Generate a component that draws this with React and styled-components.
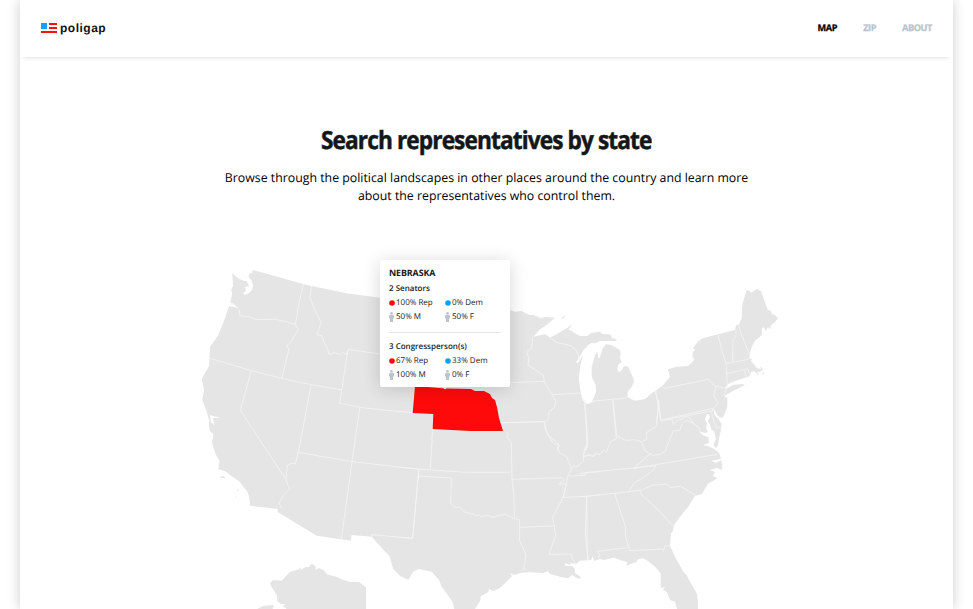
import React from "react";
import styled, { createGlobalStyle } from "styled-components";

const GlobalStyle = createGlobalStyle`
  * { box-sizing: border-box; }
  body { margin: 0; background: #fff; overflow: hidden; font-family: "Open Sans", "Noto Sans", sans-serif; color: #14171a; text-rendering: geometricPrecision; }
`;

const Shell = styled.div`
  width: 933px;
  height: 609px;
  margin: 0 20px;
  background: #fff;
  box-shadow: 0 0 12px rgba(0, 0, 0, 0.2);
  overflow: hidden;
`;

const Header = styled.header`
  height: 57px;
  padding: 0 21px 2px 20px;
  display: flex;
  align-items: center;
  justify-content: space-between;
  box-shadow: 0 5px 4px -4px rgba(0, 0, 0, 0.12);
`;

const Brand = styled.div`
  display: flex;
  align-items: center;
  gap: 3px;
  height: 18px;
  font: 700 12px/18px "Liberation Sans", Arial, sans-serif;
  letter-spacing: 0.5px;
  color: #101114;
`;

const Nav = styled.nav`
  display: flex;
  gap: 26px;
`;

const NavLink = styled.a`
  font-size: 9.2px;
  line-height: 12px;
  font-weight: 700;
  letter-spacing: -0.42px;
  -webkit-text-stroke: 0.25px currentColor;
  color: ${(p) => (p.$active ? "#000" : "#b9c3cf")};
`;

const Intro = styled.section`
  display: flex;
  flex-direction: column;
  align-items: center;
  height: 198px;
  padding-top: 66px;
  text-align: center;
`;

const Title = styled.h1`
  margin: 0;
  font-size: 25px;
  line-height: 34px;
  font-weight: 700;
  letter-spacing: -1px;
  white-space: nowrap;
  transform: scaleX(0.907);
  -webkit-text-stroke: 0.5px currentColor;
`;

const Lead = styled.p`
  width: 545px;
  margin: 12px 0 0;
  font-size: 12.33px;
  line-height: 18px;
  color: #000;
`;

const MapArea = styled.section`
  position: relative;
  height: 354px;
  padding-left: 170px;
`;

const MapSvg = styled.svg`
  display: block;
  fill: #e5e5e5;

  .border {
    fill: none;
    stroke: #f3f3f3;
    stroke-width: 2.6px;
    stroke-linejoin: round;
  }
  .water { fill: #fff; }
  .selected { fill: #ff0a0a; }
`;

const Tooltip = styled.aside`
  position: absolute;
  left: 360px;
  top: 5px;
  width: 130px;
  height: 127px;
  padding: 6px 9px 0;
  border-radius: 2px;
  background: #fff;
  box-shadow: 0 2px 18px rgba(0, 0, 0, 0.16);
`;

const StateName = styled.h2`
  margin: 0;
  font-size: 8.9px;
  line-height: 14px;
  font-weight: 700;
  letter-spacing: -0.1px;
`;

const GroupTitle = styled.h3`
  margin: 0;
  font-size: 8px;
  line-height: 15px;
  font-weight: 600;
  padding-top: 1px;
`;

const Stats = styled.div`
  display: grid;
  grid-template-columns: 56px 56px;
  grid-auto-rows: 14px;
`;

const Stat = styled.span`
  display: flex;
  align-items: center;
  gap: 1px;
  font-size: 8px;
  line-height: 14px;
  white-space: nowrap;
`;

const Marker = styled.svg`
  flex: none;
  width: 6px;
  height: 10px;
  margin: -1px 0 0;
  fill: ${(p) => p.$color};
`;

const Divider = styled.hr`
  height: 1px;
  margin: 8px 0 5px;
  border: 0;
  background: #e6e6e6;
`;

const Dot = ({ color }) => (
  <Marker $color={color} viewBox="0 0 6 10">
    <circle cx="3" cy="5" r="2.8" />
  </Marker>
);

const Person = () => (
  <Marker $color="#bcc4cf" viewBox="0 0 6 10">
    <circle cx="2.5" cy="1.3" r="1.3" />
    <path d="M1 2.8h3l1 1v2.7H4V10H1V6.5H0V3.8z" />
  </Marker>
);

const groups = [
  { title: "2 Senators", rep: "100% Rep", dem: "0% Dem", m: "50% M", f: "50% F" },
  { title: "3 Congressperson(s)", rep: "67% Rep", dem: "33% Dem", m: "100% M", f: "0% F" },
];

const mainland =
  "M232.3 273.3L238 278.3L243 280.5L247 281.2L249 283L250.5 280L248.5 276L250 272.5L252 273.5L252.7 270L303.3 284L311.7 286L346.7 293.3L380 297.7L430 304L510 310L515 311.7L521.7 311L525 313L530 315L533 315L538.3 316.7L540 318.3L546 317L555 317.7L546.7 325L540 329.3L533.3 336.7L545 334.3L550 337.7L555 335L566.7 328.3L572.7 324L568.3 330L571.7 331L576 334L580 336L587.3 336L591 333L600 331.7L602.7 334.3L610 334.3L612 338L616.7 339.3L616 341L606.7 341L600 341L595 343.3L591.7 342.7L588.3 345L586 347.7L584 349L581.7 353.3L576 362.7L578.3 362.7L583.3 355L580 366.7L579 378.3L580 388L581.7 396.7L584 402.3L587.3 404L591.7 402.3L594 397L596 391.7L595.7 385L591.7 376.7L591.7 366.7L594 359L595 355L597.7 351.7L598 358L599.8 358L601 353.3L603 348L606 344.3L611 345L615 347L620 350L620.7 353.3L620 358L621.7 361.7L618 365L617.3 369L618.3 371.7L621 371.4L624 366L628.3 366.7L631 373L633.3 378.3L634 382L631 388L628 391L627.3 396.7L631 399L635 400.7L645 399L651.7 393.3L656.7 390L663.3 385L670 376.7L667.7 369.3L676.7 366.7L688.3 366L694.3 360L692.3 356L693 352L695 350L693 348L698 341.5L702.7 338.3L718 334.3L735 330L736 325.5L739 324.3L741.7 318.3L742 309L742.7 303.3L746.7 290L749.5 291L751 292.7L756.7 289L761 291L766.7 306.7L768 310L770.7 310.7L772 314L775 315L778 318.5L774 323L771.7 324.3L770 329L768 327L766 331L763.3 327L762 329L761.7 335L755 340.7L751.7 346.7L750 353.3L749.3 358.3L752 359L751 361L753.3 363.3L757 368.3L761 369L760 366L763 369.2L762 371L756 373L754 371L751 372L750 376L743.3 378.3L735 381L728 384L725 388L726 389L733 385L742.5 384L745 385L733 391L726 395L724.3 397L727.3 397.3L727.3 406.7L725 413L722.7 418.3L718 416L715 411L713.3 408.3L714.5 415L718.5 419L721.7 424L721 430L719.3 437L718 445L716 448L713.5 445L716 439L714 431L711.7 430L710 425L708 421L710 417L708.3 413.5L706 416L705 420L707 423L706 428L708 432L705 433L699 431.5L704 436L708.3 437L709 443L703 445L710 446.7L716.7 450.7L719 453L721 458.3L717 460L711 460.5L716 463L721 460L722.3 465L721.7 470L717 468L710 470L715 472L713 476L717.3 478L715 480L708.3 483.3L701.7 494.3L695 496L688.3 506.7L680 516.7L674 525L673 531L671 533.3L670 545.7L675 556.7L683.3 571.7L687 575.5L689 580L696.7 593.3L698 602L698 612L678 612L675 601.7L670 600L666.7 591.7L663 590L665 587L661 588L660.7 583.3L660.7 573.3L655 566.7L648 561L643.3 558.3L638 559L636.7 562L631 564L626.7 565.7L627 562L623 561L613.3 557.7L604 560L600 559L594 561L592.7 556L591.3 560L580 560.7L576 564L571 563.3L570 565L565 563L565.5 566L572 566L575 569L575 573L581 577L579 579L572 575L568.3 578.3L560 576.7L550 574L548 571L543.3 573L530 572.3L521.7 572.7L514 575L510 573L512 576L508.3 580L500 587.7L494 591L489 589L488.3 592L481 596L480 601L475 609L477 612L455 612L453 603L450 598.3L441.7 586.7L439 580L431.7 571.7L418.3 569L413 572L408.3 580L400 576L393.3 569L391 562L390 556.7L379 545L371.7 536.7L351.7 535L350.7 540.7L316.7 535.7L277.3 511.7L278 509L250 505.7L249.3 496.7L247 491L242 485L240 482L230 475L225 471L218.3 469.3L219.5 461L216 455L214 449L211.5 441L213 439L213.3 434L210 431L209 427L209 420L206.5 411L202.3 400L204 390L201.7 379L205 373L209 366L209.5 358L210 347L218.3 335L225 318.3L230 303.3L232.3 293.3L231 290L233 286Z";

const alaska =
  "M270 583.3L273 580L281.7 580.7L286 576L290 572L298 569.5L301 567L300 570L306 567L309 567L312 563.5L316 567L315 570L319 568L324 570.5L327 574.5L336.7 576.7L341 579L350 582L359 582L366 587.3L366 611L287 611L286 608L283 607L285 604L281 604L277.3 601L276.7 595L271 586Z";

const westBorders =
  "M340 87L328 140L316 208L325 224L312 245L305 258L290 273L297 282L275 370M365 93L360 128L370 155L383 182L393 200L388 220L380 238L396 243L405 270L412 280L417 298L434 293L452 299L460 292L470 299L474 283L570 297M120 147L134 151L148 163L150 182L180 186L196 194L260 193L316 208M60 310L184 347L275 370L363 389L456 405M474 283L449 445L510 457L600 467L670 473M184 347L151 465L170 495M363 389L341 510L325 592M510 457L504 495";
const southwestBorders =
  "M170 0L287 177L299 207L282 224L267 248L274 264M325 97L316 132L303 130L292 136L288 177M325 97L486 125L690 148M504 0L486 125L454 358M686 148L668 355L544 344L548 352";
const plainsBorders =
  "M98 26L91 150M0 142L91 150L198 157L334 157M57 150L55 168L154 174L152 250L165 263L178 261L195 277L220 282L228 288L235 284L245 290L260 286L268 288L280 292L290 288L315 283L343 296L342 225L336 178L334 68L321 50L325 40L318 35M55 168L38 355L0 352M343 296L359 299L359 363L378 405L371 450M334 178L486 173L492 181L478 192L500 191L490 230L458 292L467 345L447 403L514 402L517 416L526 432M359 322L460 318M305 9L425 5M432 5L437 24L442 42L476 73L473 85L479 99L500 110L506 125L514 148L503 170L490 232L560 229L556 342L565 420M560 229L600 225M514 148L518 140L531 140L551 123L551 103L562 80L558 0M506 168L555 166L556 158L600 155M551 111L570 104L581 109L590 100L600 103";
const midwestBorders =
  "M98 112L95 142L80 158L87 172L84 195L130 225L133 245L155 283L168 303L162 323L147 335L146 355L134 367L135 384L148 410L160 430L177 436L173 450M0 249L133 244M0 368L134 365M0 368L4 385M150 113L169 127L213 137L227 149L234 163L238 181M157 284L241 279M262 312L282 303L380 294M252 308L258 352L263 425L257 450M339 300L350 405M467 275L475 320L469 367";
const northeastBorders =
  "M234 163L243 202L258 250L262 318L252 347M295 133L305 165L329 223M288 149L288 170L279 180L278 247M258 250L317 240L329 234M261 281L313 269L322 265L331 284M313 269L319 293M66 318L73 325L205 298L219 313L228 319L258 325M228 319L221 348L235 370L219 385L62 421L47 332M219 385L214 398L228 443L243 444";
const southeastBorders =
  "M15 0L22 130L10 158L10 170L22 165L37 169L48 159L60 164L71 150L79 157L92 124L109 117L98 0M109 107L137 121L165 119L184 125L200 118L199 98L214 88L230 78L236 0L242 62L400 32M184 125L194 151L216 166L240 163L255 155L262 135L270 117L280 92L299 91L305 75L318 61L340 70L357 83L362 96M242 62L275 57L280 73L295 60L307 57L318 48L331 55L340 68M212 160L162 205L412 163M0 220L227 197L221 210L205 222L185 236L163 249L148 271M0 290L104 280L182 271L217 256L261 252L270 263L302 259L350 288M182 271L183 282L210 307L246 342L278 377M104 280L136 380L137 410L149 452L247 447L251 454L254 438L270 437M20 289L22 480M52 478L60 465L52 454L142 443";

function UsMap() {
  const regions = [
    [190, 255, westBorders],
    [190, 420, southwestBorders],
    [400, 420, plainsBorders],
    [500, 300, midwestBorders],
    [640, 280, northeastBorders],
    [580, 400, southeastBorders],
  ];
  return (
    <MapSvg width="600" height="354" viewBox="190 255 600 354">
      <path d={mainland} />
      <path d={alaska} />
      <path d="M257 609L263 606L273 605L274 606L272 610ZM560 319L566 315L564 318ZM220 477L223 476L226 478L221 478ZM237 489L239 491L237 491ZM235 496L237 498L236 498ZM756 374L759 373L758 375ZM762 374L764 372L764 375Z" />
      <path className="water" d="M251 279L253 285L252 290L249 293L245 295L243 293L246 291L245 287L249 286L247 282ZM229 302L234 304L238 308L229 306ZM210 415L221 418L213 418L214 425L211 422Z" />
      {regions.map(([x, y, d]) => (
        <path key={`${x}-${y}`} className="border" d={d} transform={`translate(${x} ${y}) scale(0.33333)`} />
      ))}
      <path
        className="selected"
        d="M415 386L445 388.5L471 389L475 391L484 391L490 394L492 398L495 400L497 407L499 418L503 431L470 431L432.7 429L433.3 414L412.7 413Z"
      />
      <path className="water" d="M442.5 386.5h5l-2.5 3z" />
    </MapSvg>
  );
}

const Logo = () => (
  <svg width="17" height="12" viewBox="0 0 17 12">
    <path fill="#16a0f5" d="M1 1h6v6H1z" />
    <path fill="#fb1010" d="M9 1h8v2H9zM9 5h8v2H9zM1 9h16v2H1z" />
  </svg>
);

export default function App() {
  return (
    <>
      <GlobalStyle />
      <Shell>
        <Header>
          <Brand>
            <Logo />
            poligap
          </Brand>
          <Nav>
            <NavLink $active>MAP</NavLink>
            <NavLink>ZIP</NavLink>
            <NavLink>ABOUT</NavLink>
          </Nav>
        </Header>
        <Intro>
          <Title>Search representatives by state</Title>
          <Lead>
            Browse through the political landscapes in other places around the country and learn more
            about the representatives who control them.
          </Lead>
        </Intro>
        <MapArea>
          <UsMap />
          <Tooltip>
            <StateName>NEBRASKA</StateName>
            {groups.map((g, i) => (
              <React.Fragment key={g.title}>
                {i > 0 && <Divider />}
                <GroupTitle>{g.title}</GroupTitle>
                <Stats>
                  <Stat><Dot color="#ff0a0a" />{g.rep}</Stat>
                  <Stat><Dot color="#109ff5" />{g.dem}</Stat>
                  <Stat><Person />{g.m}</Stat>
                  <Stat><Person />{g.f}</Stat>
                </Stats>
              </React.Fragment>
            ))}
          </Tooltip>
        </MapArea>
      </Shell>
    </>
  );
}
